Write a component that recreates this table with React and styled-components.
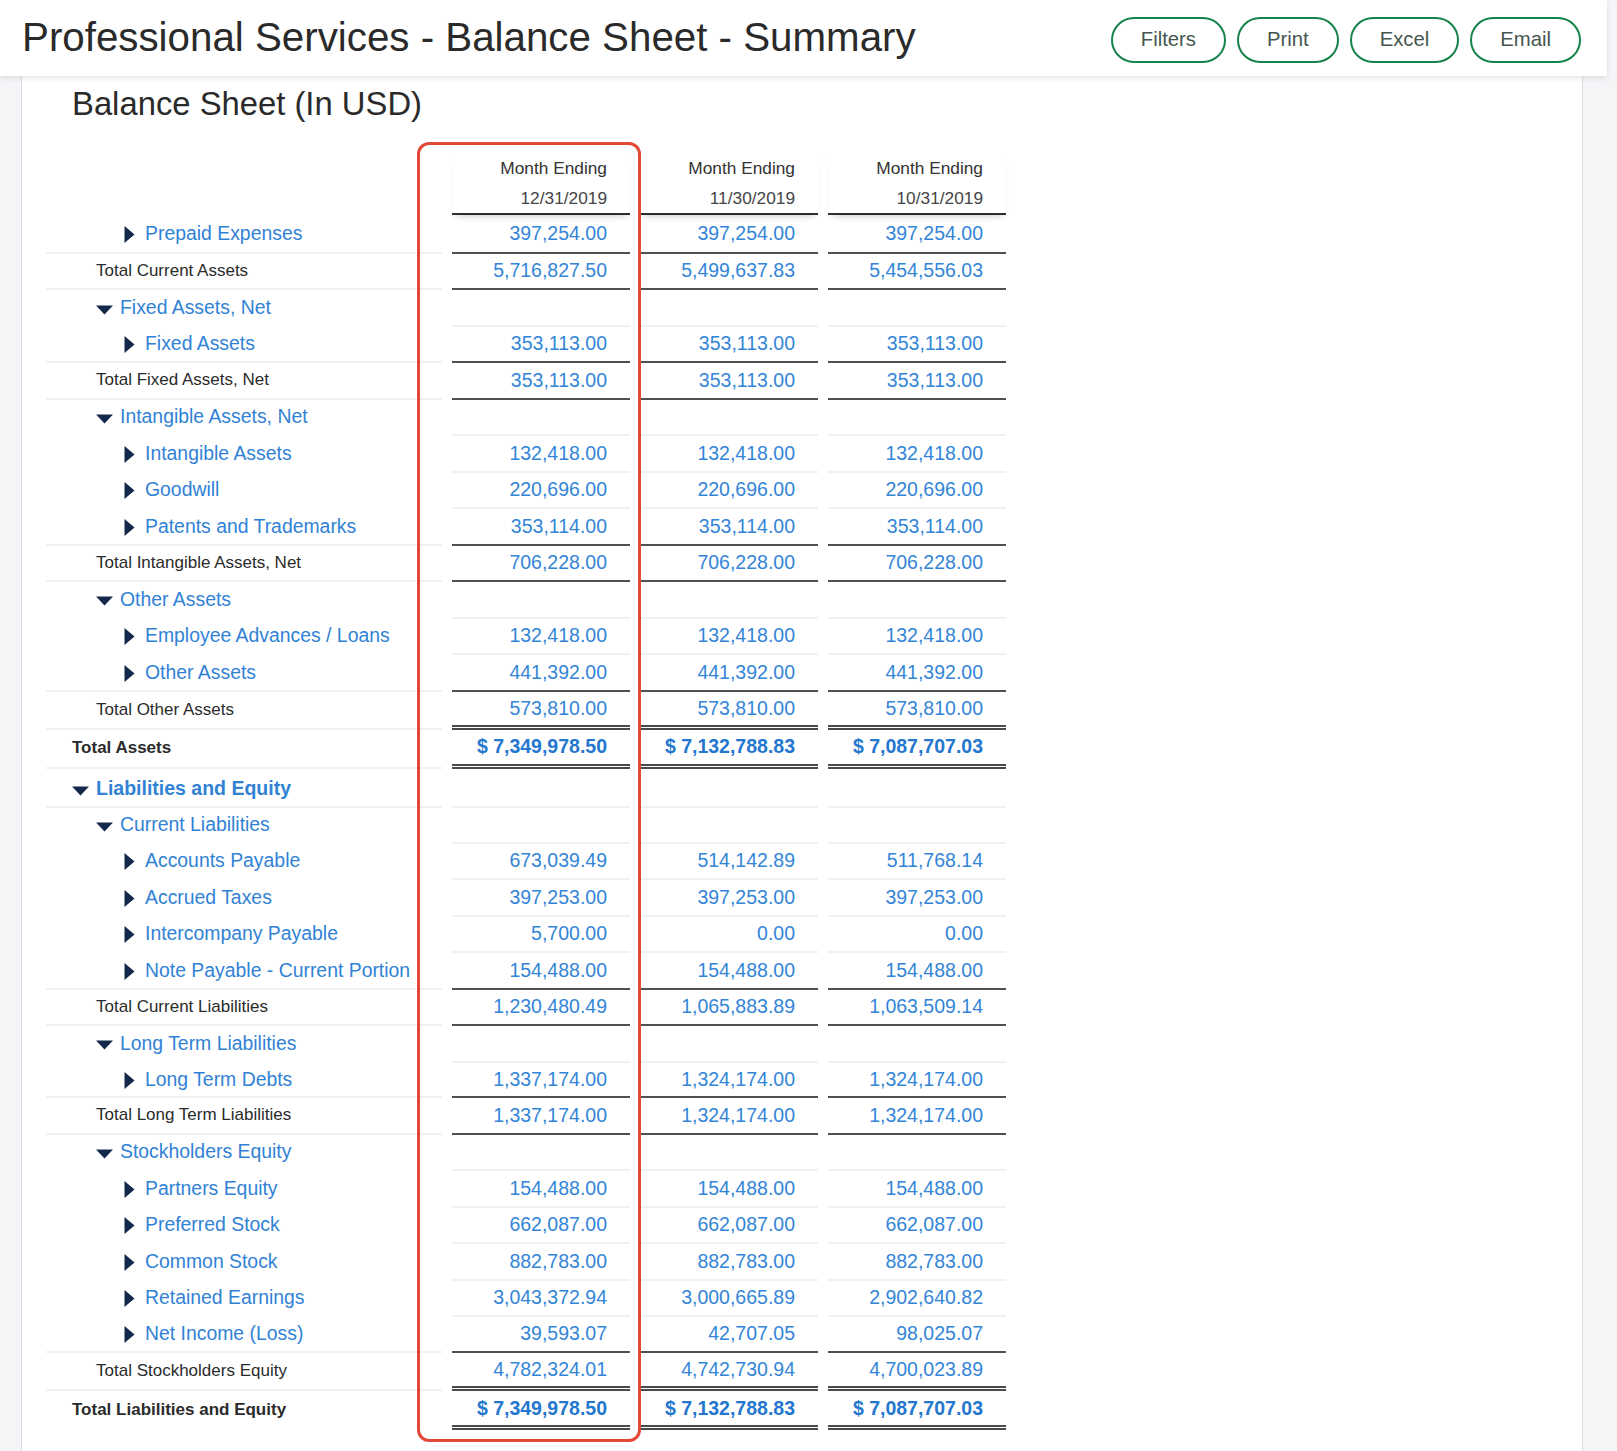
import React from "react";
import styled, { createGlobalStyle } from "styled-components";

const GlobalStyle = createGlobalStyle`
  html, body {
    margin: 0;
    padding: 0;
    background: #f3f5f7;
  }
  body {
    font-family: "Liberation Sans", Arial, sans-serif;
    color: #2b2b2b;
  }
`;

const periods = [
  { title: "Month Ending", date: "12/31/2019" },
  { title: "Month Ending", date: "11/30/2019" },
  { title: "Month Ending", date: "10/31/2019" }
];

const same = v => [v, v, v];

const rows = [
  { kind: "item", level: 2, label: "Prepaid Expenses", values: same("397,254.00"), line: "dark", height: 39, shift: 1.5 },
  { kind: "subtotal", level: 1, label: "Total Current Assets", values: ["5,716,827.50", "5,499,637.83", "5,454,556.03"], line: "dark" },
  { kind: "group", level: 1, label: "Fixed Assets, Net", shift: 1 },
  { kind: "item", level: 2, label: "Fixed Assets", values: same("353,113.00"), line: "dark" },
  { kind: "subtotal", level: 1, label: "Total Fixed Assets, Net", values: same("353,113.00"), line: "dark" },
  { kind: "group", level: 1, label: "Intangible Assets, Net" },
  { kind: "item", level: 2, label: "Intangible Assets", values: same("132,418.00") },
  { kind: "item", level: 2, label: "Goodwill", values: same("220,696.00") },
  { kind: "item", level: 2, label: "Patents and Trademarks", values: same("353,114.00"), line: "dark" },
  { kind: "subtotal", level: 1, label: "Total Intangible Assets, Net", values: same("706,228.00"), line: "dark" },
  { kind: "group", level: 1, label: "Other Assets" },
  { kind: "item", level: 2, label: "Employee Advances / Loans", values: same("132,418.00") },
  { kind: "item", level: 2, label: "Other Assets", values: same("441,392.00"), line: "dark" },
  { kind: "subtotal", level: 1, label: "Total Other Assets", values: same("573,810.00"), line: "double", height: 38 },
  { kind: "total", level: 0, label: "Total Assets", values: ["$ 7,349,978.50", "$ 7,132,788.83", "$ 7,087,707.03"], line: "double", height: 39 },
  { kind: "group", level: 0, label: "Liabilities and Equity", height: 39.5, shift: 3 },
  { kind: "group", level: 1, label: "Current Liabilities", height: 35.5 },
  { kind: "item", level: 2, label: "Accounts Payable", values: ["673,039.49", "514,142.89", "511,768.14"] },
  { kind: "item", level: 2, label: "Accrued Taxes", values: same("397,253.00") },
  { kind: "item", level: 2, label: "Intercompany Payable", values: ["5,700.00", "0.00", "0.00"] },
  { kind: "item", level: 2, label: "Note Payable - Current Portion", values: same("154,488.00"), line: "dark" },
  { kind: "subtotal", level: 1, label: "Total Current Liabilities", values: ["1,230,480.49", "1,065,883.89", "1,063,509.14"], line: "dark" },
  { kind: "group", level: 1, label: "Long Term Liabilities" },
  { kind: "item", level: 2, label: "Long Term Debts", values: ["1,337,174.00", "1,324,174.00", "1,324,174.00"], line: "dark", height: 35.5 },
  { kind: "subtotal", level: 1, label: "Total Long Term Liabilities", values: ["1,337,174.00", "1,324,174.00", "1,324,174.00"], line: "dark" },
  { kind: "group", level: 1, label: "Stockholders Equity" },
  { kind: "item", level: 2, label: "Partners Equity", values: same("154,488.00") },
  { kind: "item", level: 2, label: "Preferred Stock", values: same("662,087.00") },
  { kind: "item", level: 2, label: "Common Stock", values: same("882,783.00") },
  { kind: "item", level: 2, label: "Retained Earnings", values: ["3,043,372.94", "3,000,665.89", "2,902,640.82"] },
  { kind: "item", level: 2, label: "Net Income (Loss)", values: ["39,593.07", "42,707.05", "98,025.07"], line: "dark", height: 35.5 },
  { kind: "subtotal", level: 1, label: "Total Stockholders Equity", values: ["4,782,324.01", "4,742,730.94", "4,700,023.89"], line: "double", height: 38.5 },
  { kind: "total", level: 0, label: "Total Liabilities and Equity", values: ["$ 7,349,978.50", "$ 7,132,788.83", "$ 7,087,707.03"], line: "double", height: 39, last: true }
];

const Caret = ({ open }) =>
  open ? (
    <CaretBox>
      <svg width="17" height="10" viewBox="0 0 17 10">
        <polygon points="0,0.5 17,0.5 8.5,9.5" fill="#14284b" />
      </svg>
    </CaretBox>
  ) : (
    <CaretBox $right>
      <svg width="11" height="17" viewBox="0 0 11 17">
        <polygon points="0.5,0 10.5,8.5 0.5,17" fill="#14284b" />
      </svg>
    </CaretBox>
  );

export default function App() {
  return (
    <>
      <GlobalStyle />
      <TopBar>
        <PageTitle>Professional Services - Balance Sheet - Summary</PageTitle>
        <Actions>
          <PillButton>Filters</PillButton>
          <PillButton>Print</PillButton>
          <PillButton>Excel</PillButton>
          <PillButton>Email</PillButton>
        </Actions>
      </TopBar>
      <Panel>
        <ReportTitle>Balance Sheet (In USD)</ReportTitle>
        <Table>
          <Row $height={62}>
            <span />
            {periods.map(p => (
              <HeadCell key={p.date}>
                <HeadTitle>{p.title}</HeadTitle>
                <HeadDate>{p.date}</HeadDate>
              </HeadCell>
            ))}
          </Row>
          {rows.map((r, i) => {
            const labelLine = r.line || r.level === 0;
            return (
              <Row key={i} $height={r.height || 36.5} $shift={r.shift || 0}>
                <LabelCell
                  $level={r.kind === "item" ? 2 : r.level}
                  $kind={r.kind}
                  $line={labelLine && !r.last}
                >
                  {r.kind === "group" && <Caret open />}
                  {r.kind === "item" && <Caret />}
                  <span>{r.label}</span>
                </LabelCell>
                {[0, 1, 2].map(c => (
                  <ValueCell key={c} $line={r.line || "light"} $bold={r.kind === "total"}>
                    {r.values ? r.values[c] : ""}
                  </ValueCell>
                ))}
              </Row>
            );
          })}
          <Highlight />
        </Table>
      </Panel>
    </>
  );
}

const TopBar = styled.header`
  position: relative;
  z-index: 2;
  width: 1607px;
  height: 76px;
  box-sizing: border-box;
  padding: 0 26px 0 22px;
  display: flex;
  align-items: center;
  justify-content: space-between;
  background: #ffffff;
  box-shadow: 0 2px 5px rgba(30, 40, 60, 0.12);
`;

const PageTitle = styled.h1`
  margin: 0;
  font-size: 40.3px;
  font-weight: 400;
  color: #2a2a2a;
`;

const Actions = styled.div`
  display: flex;
  gap: 11px;
  padding-top: 3px;
`;

const PillButton = styled.button`
  height: 46px;
  padding: 0 28px;
  border: 2.5px solid #14844a;
  border-radius: 23px;
  background: #ffffff;
  color: #45564f;
  font-family: "Liberation Sans", Arial, sans-serif;
  font-size: 20.3px;
  cursor: pointer;
`;

const Panel = styled.main`
  margin: 0 34px 0 21px;
  min-height: 1375px;
  box-sizing: border-box;
  padding: 8px 0 0 24px;
  background: #ffffff;
  border-left: 1px solid #d8dde3;
  border-right: 1px solid #d8dde3;
`;

const ReportTitle = styled.h2`
  margin: 0 0 0 26px;
  height: 40px;
  line-height: 40px;
  font-size: 32.8px;
  font-weight: 400;
  color: #2a2a2a;
`;

const Table = styled.div`
  position: relative;
  margin-top: 28.5px;
  width: 960px;
`;

const Row = styled.div`
  display: grid;
  grid-template-columns: 396px 178px 178px 178px;
  column-gap: 10px;
  height: ${p => p.$height}px;

  & > * {
    padding-top: ${p => p.$shift || 0}px;
  }
`;

const HeadCell = styled.div`
  box-sizing: border-box;
  padding-right: 23px;
  text-align: right;
  background: #ffffff;
  border-bottom: 2px solid #2e2e2e;
  box-shadow: 0 5px 6px -4px rgba(0, 0, 0, 0.22);
  font-size: 17.3px;
`;

const HeadTitle = styled.div`
  height: 31px;
  line-height: 31px;
  color: #333333;
`;

const HeadDate = styled.div`
  height: 29px;
  line-height: 29px;
  color: #454545;
`;

const labelFonts = {
  group: "font-size: 19.4px; color: #3182d5;",
  item: "font-size: 19.4px; color: #3182d5;",
  subtotal: "font-size: 17px; color: #2b2b2b;",
  total: "font-size: 17px; font-weight: 700; color: #2b2b2b;"
};

const LabelCell = styled.div`
  box-sizing: border-box;
  display: flex;
  align-items: center;
  white-space: nowrap;
  padding-left: ${p => 26 + p.$level * 24}px;
  border-bottom: 2px solid ${p => (p.$line ? "#eef0f3" : "transparent")};
  ${p => labelFonts[p.$kind]}
  ${p => p.$kind === "group" && p.$level === 0 && "font-weight: 700; font-size: 19.5px;"}
`;

const CaretBox = styled.span`
  display: inline-flex;
  justify-content: flex-start;
  width: 24px;
  margin-left: ${p => (p.$right ? "4px" : "0")};
  margin-right: ${p => (p.$right ? "-3px" : "0")};
  padding-top: ${p => (p.$right ? "2px" : "4px")};
`;

const lineStyles = {
  light: "2px solid #eef0f3",
  dark: "2px solid #4f4f4f",
  double: "5px double #4a4a4a"
};

const ValueCell = styled.div`
  box-sizing: border-box;
  display: flex;
  align-items: center;
  justify-content: flex-end;
  padding-right: 23px;
  border-bottom: ${p => lineStyles[p.$line]};
  font-size: 19.5px;
  font-weight: ${p => (p.$bold ? 700 : 400)};
  color: ${p => (p.$bold ? "#2477cf" : "#3385d7")};
`;

const Highlight = styled.div`
  position: absolute;
  left: 371px;
  top: -11px;
  width: 224px;
  height: 1300px;
  box-sizing: border-box;
  border: 3px solid #e14a3a;
  border-radius: 12px;
  pointer-events: none;
`;
